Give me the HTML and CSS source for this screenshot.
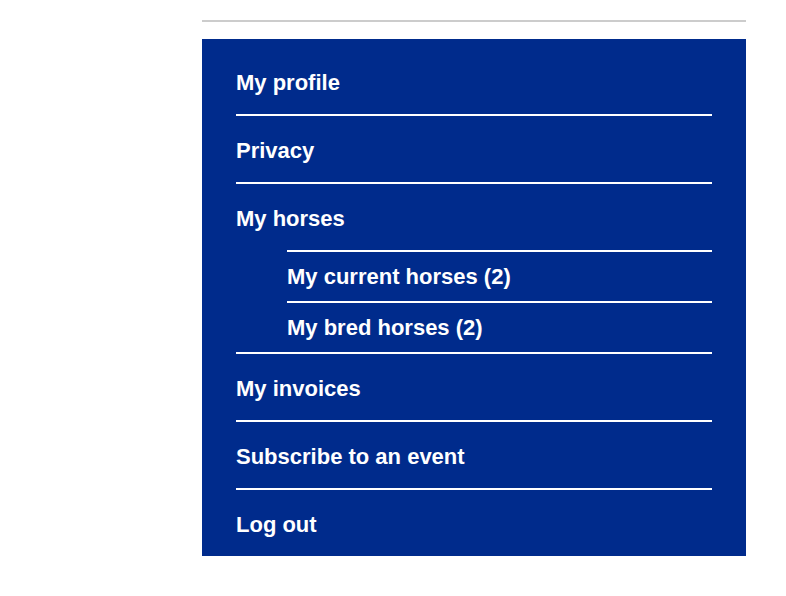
FILE: index.html
```html
<!DOCTYPE html>
<html lang="en">
<head>
    <meta charset="UTF-8">
    <meta name="viewport" content="width=device-width, initial-scale=1.0">
    <title>Account menu</title>
    <link rel="stylesheet" href="styles.css">
</head>
<body>
    <div class="account-nav">
        <hr class="top-rule">
        <ul class="menu">
            <li class="menu-item"><a href="#">My profile</a></li>
            <li class="menu-item"><a href="#">Privacy</a></li>
            <li class="menu-item">
                <a href="#">My horses</a>
                <ul class="submenu">
                    <li class="submenu-item"><a href="#">My current horses (2)</a></li>
                    <li class="submenu-item"><a href="#">My bred horses (2)</a></li>
                </ul>
            </li>
            <li class="menu-item"><a href="#">My invoices</a></li>
            <li class="menu-item"><a href="#">Subscribe to an event</a></li>
            <li class="menu-item"><a href="#">Log out</a></li>
        </ul>
    </div>
</body>
</html>
```

FILE: styles.css
```css
body {
    margin: 0;
    font-family: "Liberation Sans", Arial, sans-serif;
    background-color: white;
}

.account-nav {
    width: 544px;
    margin-left: 202px;
    padding-top: 20px;
}

.top-rule {
    height: 2px;
    margin: 0 0 17px 0;
    border: none;
    background-color: #cccccc;
}

.menu {
    list-style: none;
    margin: 0;
    padding: 9px 34px 0 34px;
    background-color: #002b8c;
}

.menu-item {
    border-bottom: 2px solid white;
}

.menu-item:last-child {
    border-bottom: none;
}

.menu a {
    display: block;
    color: white;
    font-size: 22px;
    font-weight: bold;
    line-height: 26px;
    text-decoration: none;
}

.menu-item > a {
    padding: 22px 0 18px 0;
}

.submenu {
    list-style: none;
    margin: 0 0 0 51px;
    padding: 0;
}

.submenu-item {
    border-top: 2px solid white;
}

.submenu-item > a {
    padding: 12px 0 11px 0;
}
```
